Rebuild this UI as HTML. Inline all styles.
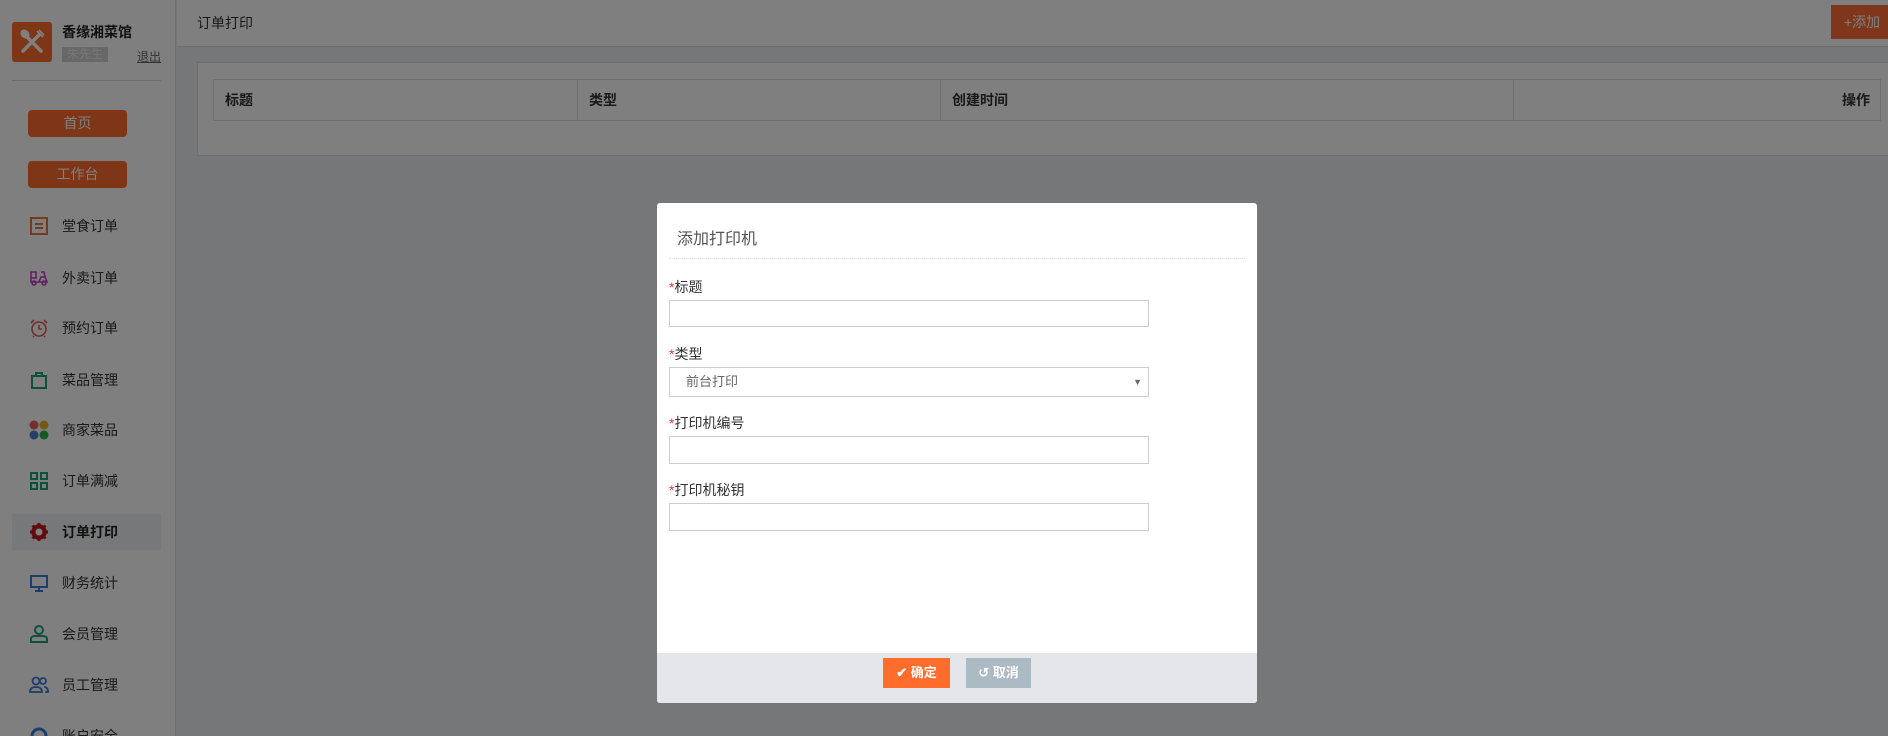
<!DOCTYPE html>
<html><head><meta charset="utf-8"><style>
*{margin:0;padding:0;box-sizing:border-box}
html{width:1888px;height:736px;overflow:hidden}
body{width:1888px;height:736px;overflow:hidden;position:relative;background:#eceef3;font-family:"Liberation Sans","Noto Sans CJK SC",sans-serif;font-size:14px;color:#333}
.abs{position:absolute}
#side{left:0;top:0;width:176px;height:736px;background:#fff;border-right:1px solid #ddd;overflow:hidden}
.logo{left:12px;top:22px;width:40px;height:40px;background:#ff6c2c;border-radius:3px}
.name{left:62px;top:22px;font-size:14px;font-weight:bold;color:#222}
.user{left:62px;top:47px;width:46px;height:15px;background:#d0d0d0;color:#eee;font-size:12px;line-height:15px;text-align:center}
.out{left:137px;top:48px;font-size:12px;color:#666;text-decoration:underline}
.div{left:12px;top:80px;width:149px;height:1px;background:#ddd}
.btn{left:28px;width:99px;height:27px;background:#ff6c2c;border-radius:4px;color:#fff;text-align:center;line-height:27px;font-size:14px}
.mi{left:62px;font-size:14px;color:#333;line-height:20px}
.ic{left:29px;width:20px;height:20px}
#head{left:177px;top:0;right:0;height:47px;background:#fff;border-bottom:1px solid #ddd}
.panel{left:197px;top:62px;width:1691px;height:94px;background:#fff;border:1px solid #ddd;border-right:none}
table{position:absolute;left:213px;top:79px;width:1668px;height:42px;border-collapse:collapse}
td{border:1px solid #ddd;font-weight:bold;font-size:14px;padding-left:11px;background:#fff}
.mask{left:0;top:0;width:1888px;height:736px;background:rgba(0,0,0,.5)}
.modal{left:657px;top:203px;width:600px;height:500px;background:#fff;border-radius:3px;overflow:hidden}
.lbl{left:12px;font-size:14px;color:#333}
.lbl b{color:#e33;font-weight:normal}
.inp{left:12px;width:480px;border:1px solid #ccc;background:#fff}
</style></head><body>
<div id="side" class="abs">
 <div class="abs logo"><svg width="40" height="40" viewBox="0 0 40 40"><g stroke="#fff" stroke-width="3.5" stroke-linecap="round" fill="none"><line x1="11" y1="29" x2="27" y2="13"/><line x1="13" y1="13" x2="29" y2="29"/></g><ellipse cx="13" cy="12" rx="4" ry="5" fill="#fff" transform="rotate(-45 13 12)"/><g stroke="#fff" stroke-width="1.6"><line x1="25" y1="9" x2="31" y2="15"/><line x1="27" y1="8" x2="32" y2="13"/></g></svg></div>
 <div class="abs name">香缘湘菜馆</div>
 <div class="abs user">朱先生</div>
 <div class="abs out">退出</div>
 <div class="abs div"></div>
 <div class="abs btn" style="top:110px">首页</div>
 <div class="abs btn" style="top:161px">工作台</div>
 <svg class="abs ic" style="top:216px" viewBox="0 0 20 20"><rect x="2" y="2" width="16" height="16" fill="none" stroke="#e8743b" stroke-width="2"/><line x1="6" y1="8" x2="14" y2="8" stroke="#e8743b" stroke-width="2"/><line x1="6" y1="12" x2="14" y2="12" stroke="#e8743b" stroke-width="2"/></svg>
 <div class="abs mi" style="top:216px">堂食订单</div>
 <svg class="abs ic" style="top:268px" viewBox="0 0 20 20"><g fill="none" stroke="#c23ec8" stroke-width="1.6"><path d="M2 4h5v6H2zM2 10v4h16l-2-5h-4l-2 5"/><circle cx="5" cy="15" r="2"/><circle cx="15" cy="15" r="2"/><path d="M12 4h3l1 5"/></g></svg>
 <div class="abs mi" style="top:268px">外卖订单</div>
 <svg class="abs ic" style="top:318px" viewBox="0 0 20 20"><g fill="none" stroke="#e05a5a" stroke-width="1.6"><circle cx="10" cy="11" r="7"/><path d="M10 7v4h3M2 5l3-3M18 5l-3-3M5 18l-1 1M15 18l1 1"/></g></svg>
 <div class="abs mi" style="top:318px">预约订单</div>
 <svg class="abs ic" style="top:370px" viewBox="0 0 20 20"><g fill="none" stroke="#1aa27a" stroke-width="2"><rect x="3" y="6" width="14" height="12"/><path d="M7 6V3h6v3"/></g></svg>
 <div class="abs mi" style="top:370px">菜品管理</div>
 <svg class="abs ic" style="top:420px" viewBox="0 0 20 20"><circle cx="5" cy="5" r="4.5" fill="#e85c5c"/><circle cx="15" cy="5" r="4.5" fill="#e8b22a"/><circle cx="5" cy="15" r="4.5" fill="#4a7fd4"/><circle cx="15" cy="15" r="4.5" fill="#2bb24c"/></svg>
 <div class="abs mi" style="top:420px">商家菜品</div>
 <svg class="abs ic" style="top:471px" viewBox="0 0 20 20"><g fill="none" stroke="#1aa27a" stroke-width="2"><rect x="2" y="2" width="6" height="6"/><rect x="12" y="2" width="6" height="6"/><rect x="2" y="12" width="6" height="6"/><rect x="12" y="12" width="6" height="6"/></g></svg>
 <div class="abs mi" style="top:471px">订单满减</div>
 <div class="abs" style="left:12px;top:514px;width:149px;height:36px;background:#eef0f3"></div>
 <svg class="abs ic" style="top:522px" viewBox="0 0 20 20"><circle cx="10" cy="10" r="6" fill="none" stroke="#c4161c" stroke-width="3.5"/><g stroke="#c4161c" stroke-width="3"><line x1="10" y1="1" x2="10" y2="19"/><line x1="1" y1="10" x2="19" y2="10"/><line x1="3.5" y1="3.5" x2="16.5" y2="16.5"/><line x1="16.5" y1="3.5" x2="3.5" y2="16.5"/></g><circle cx="10" cy="10" r="3.5" fill="#fff"/></svg>
 <div class="abs mi" style="top:522px;font-weight:bold;color:#222">订单打印</div>
 <svg class="abs ic" style="top:573px" viewBox="0 0 20 20"><g fill="none" stroke="#3a7bd5" stroke-width="2"><rect x="2" y="3" width="16" height="11"/><path d="M6 18h8M10 14v4"/></g></svg>
 <div class="abs mi" style="top:573px">财务统计</div>
 <svg class="abs ic" style="top:624px" viewBox="0 0 20 20"><g fill="none" stroke="#1aa27a" stroke-width="2"><circle cx="10" cy="6" r="4"/><path d="M2 18v-3c0-2 2-3 4-3h8c2 0 4 1 4 3v3z"/></g></svg>
 <div class="abs mi" style="top:624px">会员管理</div>
 <svg class="abs ic" style="top:675px" viewBox="0 0 20 20"><g fill="none" stroke="#3a7bd5" stroke-width="1.8"><circle cx="7" cy="6" r="3.5"/><circle cx="14" cy="6" r="3"/><path d="M1 17c0-4 3-5 6-5s6 1 6 5zM15 12c2 0 4 1 4 5h-3"/></g></svg>
 <div class="abs mi" style="top:675px">员工管理</div>
 <svg class="abs ic" style="top:726px" viewBox="0 0 20 20"><circle cx="10" cy="10" r="7" fill="none" stroke="#3a7bd5" stroke-width="3"/></svg>
 <div class="abs mi" style="top:726px">账户安全</div>
</div>
<div id="head" class="abs"><div class="abs" style="left:20px;top:13px;font-size:14px;color:#333">订单打印</div></div>
<div class="abs" style="left:1831px;top:5px;width:57px;height:34px;background:#ff6c34;color:#fff;line-height:34px;padding-left:13px;font-size:14px">+添加</div>
<div class="abs panel"></div>
<table><tr><td style="width:364px">标题</td><td style="width:363px">类型</td><td style="width:573px">创建时间</td><td style="text-align:right;padding-right:10px">操作</td></tr></table>
<div class="abs mask"></div>
<div class="abs modal">
 <div class="abs" style="left:20px;top:22px;font-size:16px;color:#555">添加打印机</div>
 <div class="abs" style="left:12px;top:55px;width:576px;border-top:1px dotted #ddd"></div>
 <div class="abs lbl" style="top:74px"><b>*</b>标题</div>
 <div class="abs inp" style="top:97px;height:27px"></div>
 <div class="abs lbl" style="top:141px"><b>*</b>类型</div>
 <div class="abs inp" style="top:164px;height:30px;color:#666;font-size:13px;line-height:28px;padding-left:16px">前台打印<span style="position:absolute;right:6px;top:0;font-size:9px;color:#666">▼</span></div>
 <div class="abs lbl" style="top:210px"><b>*</b>打印机编号</div>
 <div class="abs inp" style="top:233px;height:28px"></div>
 <div class="abs lbl" style="top:277px"><b>*</b>打印机秘钥</div>
 <div class="abs inp" style="top:300px;height:28px"></div>
 <div class="abs" style="left:0;top:450px;width:600px;height:50px;background:#e4e6ea"></div>
 <div class="abs" style="left:226px;top:455px;width:67px;height:30px;background:#ff6c2c;color:#fff;font-size:13px;font-weight:bold;line-height:30px;text-align:center">✔ 确定</div>
 <div class="abs" style="left:309px;top:455px;width:65px;height:30px;background:#abbac3;color:#fff;font-size:13px;font-weight:bold;line-height:30px;text-align:center">↺ 取消</div>
</div>
</body></html>
